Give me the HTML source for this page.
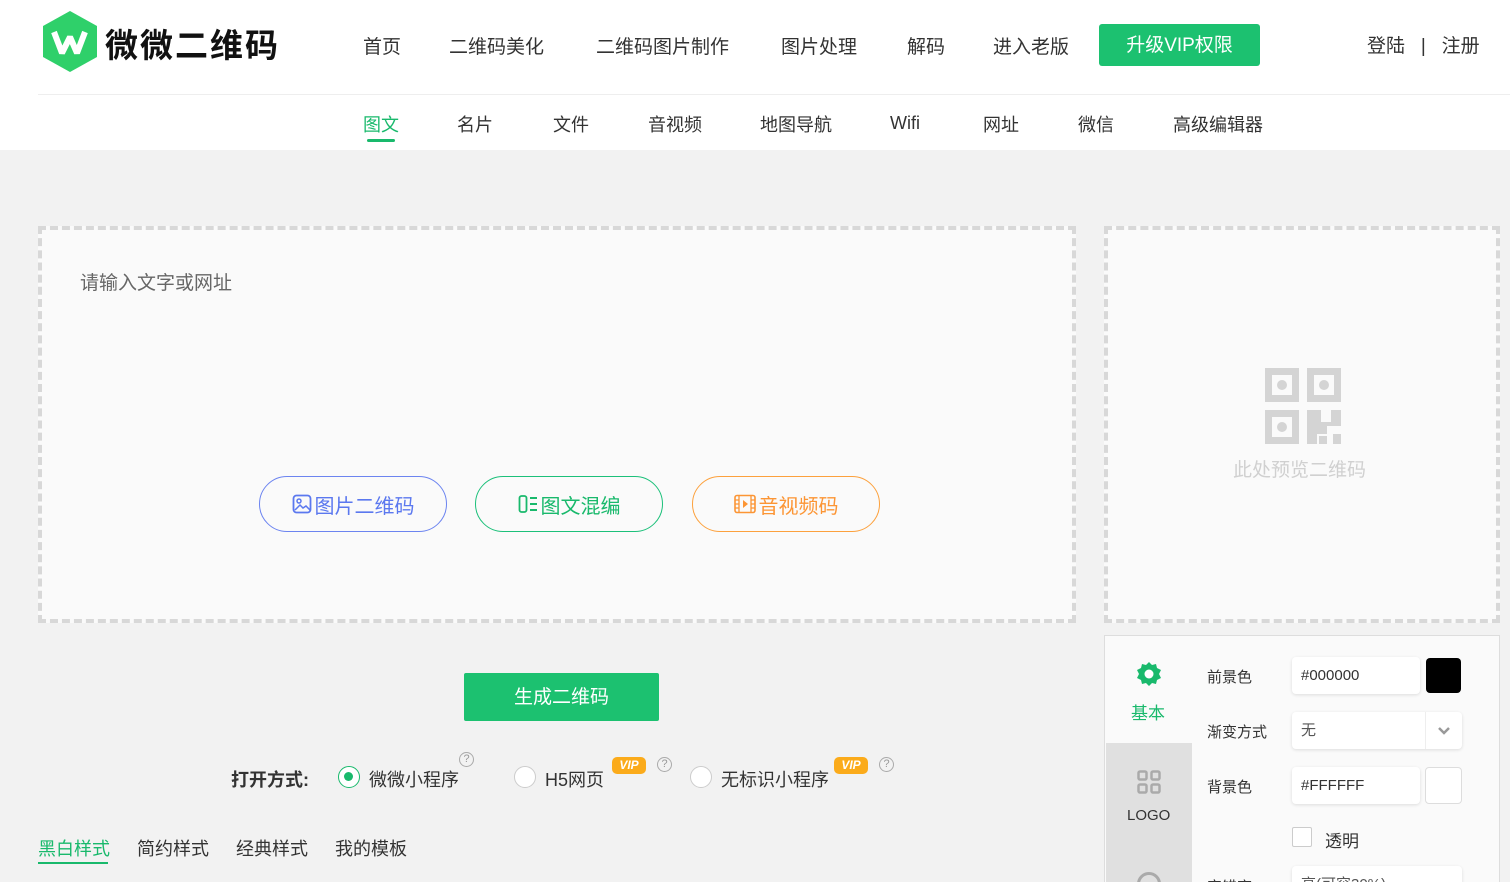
<!DOCTYPE html>
<html><head><meta charset="utf-8"><style>
*{margin:0;padding:0;box-sizing:border-box}
html,body{width:1510px;height:882px;overflow:hidden}
body{background:#f2f2f2;font-family:"Liberation Sans","Noto Sans CJK SC",sans-serif;color:#333;position:relative}
.a{position:absolute;white-space:nowrap}
.hdr{position:absolute;left:0;top:0;width:1510px;height:150px;background:#fff}
.nav{font-size:19px;color:#333;top:32px}
.sub{font-size:18px;color:#333;top:111px}
.dash{position:absolute;border:4px dashed #d8d8d8;background:#fafafa}
.pill{position:absolute;top:476px;width:188px;height:56px;border:1.5px solid;border-radius:28px;font-size:20px;display:flex;align-items:center;justify-content:center;gap:3px;background:#fafafa}
.inp{position:absolute;background:#fff;border-radius:4px;box-shadow:0 1px 3px rgba(0,0,0,.12);font-size:15px;color:#333;padding-left:9px;line-height:37px;height:37px}
.lbl{font-size:15px;color:#333}
.radio{position:absolute;width:22px;height:22px;border-radius:50%;border:1.5px solid #ccc;top:766px;background:#fff}
.q{position:absolute;width:15px;height:15px;border:1px solid #aaa;border-radius:50%;font-size:11px;color:#999;text-align:center;line-height:13px}
.vip{position:absolute;width:34px;height:17px;background:#fbab1b;border-radius:5px;color:#fff;font-size:12px;font-weight:bold;font-style:italic;text-align:center;line-height:17px}
</style></head><body>
<div class="hdr"></div>
<svg class="a" style="left:42px;top:11px" width="56" height="62" viewBox="0 0 56 62"><polygon points="28,0 55,15 55,46 28,61 1,46 1,15" fill="#2fd06a"/><path d="M12 21 L20 42 L28 26 L35 42 L43 21" stroke="#fff" stroke-width="6" fill="none" stroke-linejoin="bevel"/></svg>
<div class="a" style="left:105px;top:19px;font-size:33px;font-weight:bold;color:#111;letter-spacing:2px">微微二维码</div>
<div class="a nav" style="left:363px">首页</div>
<div class="a nav" style="left:449px">二维码美化</div>
<div class="a nav" style="left:596px">二维码图片制作</div>
<div class="a nav" style="left:781px">图片处理</div>
<div class="a nav" style="left:907px">解码</div>
<div class="a nav" style="left:993px">进入老版</div>
<div class="a" style="left:1099px;top:24px;width:161px;height:42px;background:#1cc170;border-radius:3px;color:#fff;font-size:19px;text-align:center;line-height:44px">升级VIP权限</div>
<div class="a" style="left:1367px;top:31px;font-size:19px;color:#333">登陆 &nbsp;&nbsp;|&nbsp;&nbsp; 注册</div>
<div class="a" style="left:38px;top:94px;width:1472px;height:1px;background:#eee"></div>
<div class="a sub" style="left:363px;color:#19b96c">图文</div>
<div class="a" style="left:367px;top:139px;width:28px;height:3px;background:#19b96c;border-radius:2px"></div>
<div class="a sub" style="left:457px">名片</div>
<div class="a sub" style="left:553px">文件</div>
<div class="a sub" style="left:648px">音视频</div>
<div class="a sub" style="left:760px">地图导航</div>
<div class="a sub" style="left:890px;top:113px">Wifi</div>
<div class="a sub" style="left:983px">网址</div>
<div class="a sub" style="left:1078px">微信</div>
<div class="a sub" style="left:1173px">高级编辑器</div>

<div class="dash" style="left:38px;top:226px;width:1038px;height:397px"></div>
<div class="a" style="left:80px;top:268px;font-size:19px;color:#666">请输入文字或网址</div>
<div class="pill" style="left:259px;border-color:#6c84f0;color:#5b78ef"><svg width="20" height="20" viewBox="0 0 20 20"><rect x="1.5" y="1.5" width="17" height="17" rx="3" stroke="#5b78ef" stroke-width="1.8" fill="none"/><circle cx="7" cy="7" r="2" stroke="#5b78ef" stroke-width="1.5" fill="none"/><path d="M3 16l5-5 3 3 3-2 4 4" stroke="#5b78ef" stroke-width="1.5" fill="none"/></svg>图片二维码</div>
<div class="pill" style="left:475px;border-color:#1cc07a;color:#19b96c"><svg width="20" height="20" viewBox="0 0 20 20"><rect x="1.5" y="2" width="7" height="16" rx="2" stroke="#19b96c" stroke-width="1.8" fill="none"/><path d="M12 4h7M12 10h7M12 16h7" stroke="#19b96c" stroke-width="2"/></svg>图文混编</div>
<div class="pill" style="left:692px;border-color:#fca13d;color:#fc9534"><svg width="22" height="20" viewBox="0 0 22 20"><rect x="1" y="1.5" width="20" height="17" rx="2" stroke="#fc9534" stroke-width="1.6" fill="none"/><path d="M5 1.5v17M17 1.5v17M1 6h4M1 10h4M1 14h4M17 6h4M17 10h4M17 14h4" stroke="#fc9534" stroke-width="1.3"/><path d="M9 6l5 4-5 4z" fill="#fc9534"/></svg>音视频码</div>

<div class="dash" style="left:1104px;top:226px;width:396px;height:397px"></div>
<svg class="a" style="left:1265px;top:368px" width="76" height="76" viewBox="0 0 76 76" fill="#d4d4d4"><path fill-rule="evenodd" d="M0 0h34v34H0zM7 7v20h20V7z"/><circle cx="17" cy="17" r="5"/><path fill-rule="evenodd" d="M42 0h34v34H42zM49 7v20h20V7z"/><circle cx="59" cy="17" r="5"/><path fill-rule="evenodd" d="M0 42h34v34H0zM7 49v20h20V49z"/><circle cx="17" cy="59" r="5"/><path d="M42 42h14v12h10V42h10v16H62v8H52v10H42z"/><rect x="54" y="68" width="8" height="8"/><rect x="68" y="66" width="8" height="10"/></svg>
<div class="a" style="left:1233px;top:455px;font-size:19px;color:#d0d0d0">此处预览二维码</div>

<div class="a" style="left:1104px;top:635px;width:396px;height:260px;border:1px solid #ddd;background:#fafafa"></div>
<div class="a" style="left:1106px;top:743px;width:86px;height:150px;background:#e0e0e0"></div>
<svg class="a" style="left:1136px;top:661px" width="26" height="26" viewBox="0 0 26 26"><path d="M13 1l3 3 4-1 1 4 4 2-2 4 2 4-4 2-1 4-4-1-3 3-3-3-4 1-1-4-4-2 2-4-2-4 4-2 1-4 4 1z" fill="#19b96c"/><circle cx="13" cy="13" r="4.5" fill="#fff"/></svg>
<div class="a" style="left:1131px;top:699px;font-size:17px;color:#19b96c">基本</div>
<svg class="a" style="left:1137px;top:770px" width="24" height="24" viewBox="0 0 24 24" fill="none" stroke="#aaa" stroke-width="2.5"><rect x="1.5" y="1.5" width="8" height="8" rx="1.5"/><rect x="14.5" y="1.5" width="8" height="8" rx="1.5"/><rect x="1.5" y="14.5" width="8" height="8" rx="1.5"/><rect x="14.5" y="14.5" width="8" height="8" rx="1.5"/></svg>
<div class="a" style="left:1127px;top:807px;font-size:15px;color:#333">LOGO</div>
<div class="a" style="left:1137px;top:872px;width:24px;height:24px;border:3px solid #aaa;border-radius:50%"></div>
<div class="a lbl" style="left:1207px;top:666px">前景色</div>
<div class="inp" style="left:1292px;top:657px;width:128px">#000000</div>
<div class="a" style="left:1426px;top:658px;width:35px;height:35px;background:#000;border-radius:4px"></div>
<div class="a lbl" style="left:1207px;top:721px">渐变方式</div>
<div class="inp" style="left:1292px;top:712px;width:170px;color:#555">无</div>
<div class="a" style="left:1425px;top:712px;width:1px;height:37px;background:#eee"></div>
<svg class="a" style="left:1438px;top:727px" width="12" height="8" viewBox="0 0 12 8"><path d="M1 1l5 5 5-5" stroke="#999" stroke-width="2.5" fill="none"/></svg>
<div class="a lbl" style="left:1207px;top:776px">背景色</div>
<div class="inp" style="left:1292px;top:767px;width:128px">#FFFFFF</div>
<div class="a" style="left:1425px;top:767px;width:37px;height:37px;background:#fff;border:1px solid #ddd;border-radius:4px"></div>
<div class="a" style="left:1292px;top:827px;width:20px;height:20px;background:#fff;border:1px solid #ccc;border-radius:2px"></div>
<div class="a" style="left:1325px;top:827px;font-size:17px;color:#333">透明</div>
<div class="inp" style="left:1292px;top:866px;width:170px;color:#555">高(可容30%)</div>
<div class="a lbl" style="left:1207px;top:876px">容错率</div>

<div class="a" style="left:464px;top:673px;width:195px;height:48px;background:#1cc170;border-radius:2px;color:#fff;font-size:19px;text-align:center;line-height:50px">生成二维码</div>
<div class="a" style="left:231px;top:766px;font-size:18px;font-weight:bold;color:#333">打开方式:</div>
<div class="radio" style="left:338px;border-color:#19b96c"><div style="position:absolute;left:5px;top:5px;width:9px;height:9px;border-radius:50%;background:#19b96c"></div></div>
<div class="a" style="left:369px;top:766px;font-size:18px">微微小程序</div>
<div class="q" style="left:459px;top:752px">?</div>
<div class="radio" style="left:514px"></div>
<div class="a" style="left:545px;top:766px;font-size:18px">H5网页</div>
<div class="vip" style="left:612px;top:757px">VIP</div>
<div class="q" style="left:657px;top:757px">?</div>
<div class="radio" style="left:690px"></div>
<div class="a" style="left:721px;top:766px;font-size:18px">无标识小程序</div>
<div class="vip" style="left:834px;top:757px">VIP</div>
<div class="q" style="left:879px;top:757px">?</div>

<div class="a" style="left:38px;top:835px;font-size:18px;color:#19b96c">黑白样式</div>
<div class="a" style="left:38px;top:862px;width:70px;height:2px;background:#19b96c"></div>
<div class="a" style="left:137px;top:835px;font-size:18px">简约样式</div>
<div class="a" style="left:236px;top:835px;font-size:18px">经典样式</div>
<div class="a" style="left:335px;top:835px;font-size:18px">我的模板</div>
</body></html>
